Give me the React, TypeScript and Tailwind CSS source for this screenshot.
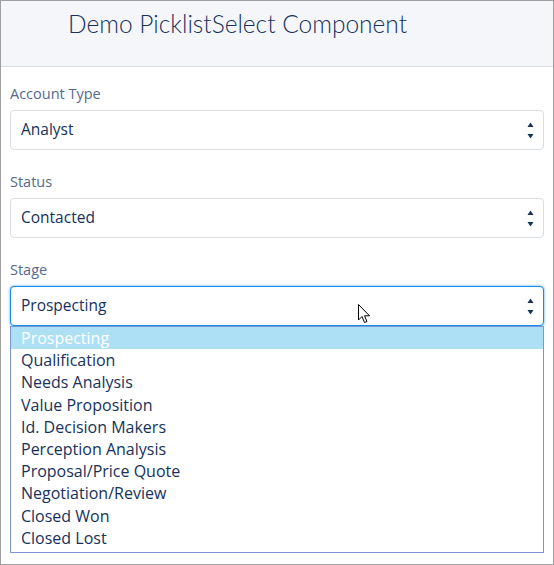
import React from "react";

const stages = [
  "Prospecting",
  "Qualification",
  "Needs Analysis",
  "Value Proposition",
  "Id. Decision Makers",
  "Perception Analysis",
  "Proposal/Price Quote",
  "Negotiation/Review",
  "Closed Won",
  "Closed Lost",
];

function Arrows() {
  return (
    <svg width="7" height="17" viewBox="0 0 7 17" className="block">
      <polygon points="3.5,0.5 6.5,5 0.5,5" fill="#16325c" />
      <polygon points="0.5,12 6.5,12 3.5,16.5" fill="#16325c" />
    </svg>
  );
}

function Select({ value, focused }: { value: string; focused?: boolean }) {
  return (
    <div
      className={
        focused
          ? "flex h-[40px] items-center justify-between rounded-[4px] border border-[#1589ee] bg-white pl-[10px] pr-[9px] text-[15.5px] text-[#16325c] shadow-[0_0_3px_#5aa9f0]"
          : "flex h-[40px] items-center justify-between rounded-[4px] border border-[#d8dde6] bg-white pl-[10px] pr-[9px] text-[15.5px] text-[#16325c]"
      }
    >
      <span className="-mt-[1px]">{value}</span>
      <Arrows />
    </div>
  );
}

function Label({ children }: { children: React.ReactNode }) {
  return <div className="mb-[6px] h-[20px] text-[14.5px] leading-[20px] text-[#54698d]">{children}</div>;
}

export default function App() {
  return (
    <div
      className="relative h-[565px] w-[554px] border border-[#a0a0a0] bg-white"
      style={{ fontFamily: "'Open Sans', Lato, sans-serif" }}
    >
      <div className="h-[66px] border-b border-[#d8dde6] bg-[#f4f6f9] pl-[67px] pt-[7px]">
        <div
          className="text-[24.5px] font-light leading-[32px] text-[#16325c]"
          style={{ fontFamily: "Lato, 'Open Sans', sans-serif" }}
        >
          Demo PicklistSelect Component
        </div>
      </div>
      <div className="px-[9px] pt-[17px]">
        <Label>Account Type</Label>
        <Select value="Analyst" />
        <div className="h-[22px]" />
        <Label>Status</Label>
        <Select value="Contacted" />
        <div className="h-[22px]" />
        <Label>Stage</Label>
        <Select value="Prospecting" focused />
        <div className="border border-[#7c98d4] bg-white pb-[3px]">
          {stages.map((s, i) => (
            <div
              key={s}
              className={
                i === 0
                  ? "h-[22.2px] bg-[#aee0f5] pl-[10px] text-[16px] leading-[22px] text-white"
                  : "h-[22.2px] pl-[10px] text-[16px] leading-[22px] text-[#16325c]"
              }
            >
              {s}
            </div>
          ))}
        </div>
      </div>
      <svg
        className="absolute left-[357px] top-[303px]"
        width="13"
        height="21"
        viewBox="0 0 13 21"
      >
        <path
          d="M0.5 0.5 L0.5 16 L4 12.5 L6.5 18.5 L9 17.5 L6.5 11.8 L11.5 11.8 Z"
          fill="white"
          stroke="black"
          strokeWidth="1"
          strokeLinejoin="miter"
        />
      </svg>
    </div>
  );
}
